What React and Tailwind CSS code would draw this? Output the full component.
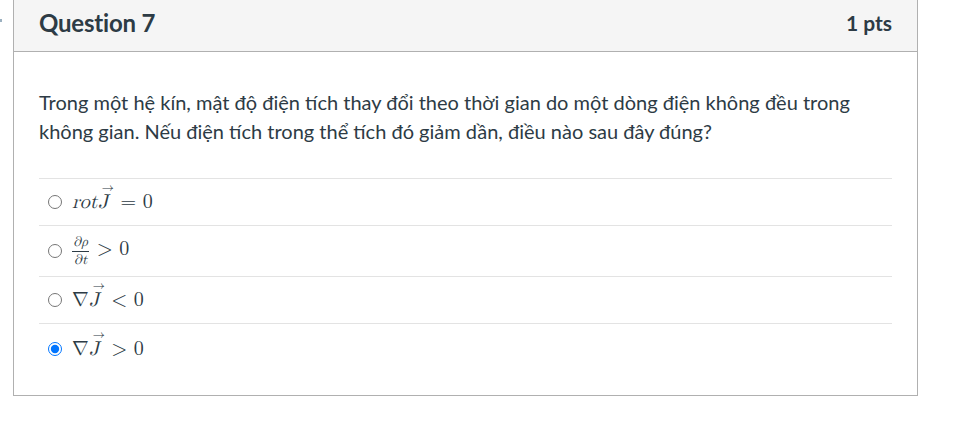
import React from "react";

const serif = { fontFamily: '"Latin Modern Math","Liberation Serif","DejaVu Serif",serif' };

function VecJ() {
  return (
    <span className="relative inline-block italic">
      J
      <span className="absolute left-[4px] top-[-6px] text-[12px] not-italic leading-none">→</span>
    </span>
  );
}

function Row({ children, checked, h, last }) {
  return (
    <div className={`flex items-center ${h} ${last ? "" : "border-b border-[#e3e3e3]"}`}>
      <input
        type="radio"
        name="q7"
        defaultChecked={checked}
        className="ml-[9px] mr-[10px] h-[14px] w-[14px] m-0"
      />
      <span className="text-[20px] text-[#2d3b45]" style={serif}>{children}</span>
    </div>
  );
}

export default function App() {
  return (
    <div className="relative w-[975px] h-[422px] bg-white" style={{ fontFamily: 'Lato, "Open Sans", sans-serif' }}>
      <span className="absolute left-0 top-[19px] w-[2px] h-[3px] bg-[#9bb0c0]" />
      <div className="ml-[13px] w-[905px] h-[396px] border-x border-b border-[#b0b0b0] flex flex-col">
        <div className="h-[52px] bg-[#f5f5f5] border-b border-[#b0b0b0] flex items-start justify-between px-[25px] pt-[5px]">
          <span className="text-[24px] font-bold text-[#2d3b45] tracking-[-0.2px]">Question 7</span>
          <span className="text-[21px] font-bold text-[#2d3b45] pt-[2px]">1 pts</span>
        </div>
        <div className="px-[25px] pt-[36px]">
          <p className="text-[20px] leading-[29px] text-[#2d3b45]">
            Trong một hệ kín, mật độ điện tích thay đổi theo thời gian do một dòng điện không đều trong không gian. Nếu điện tích trong thể tích đó giảm dần, điều nào sau đây đúng?
          </p>
          <div className="mt-[32px] border-t border-[#e3e3e3]">
            <Row h="h-[47px]">
              <span className="italic">rot</span><VecJ /> <span className="ml-[6px]">= 0</span>
            </Row>
            <Row h="h-[51px]">
              <span className="inline-flex flex-col items-center align-middle text-[14px] leading-[15px] mr-[8px] italic">
                <span className="border-b border-[#2d3b45] px-[1px] pb-[1px]">∂ρ</span>
                <span className="pt-[1px]">∂t</span>
              </span>
              <span>&gt; 0</span>
            </Row>
            <Row h="h-[47px]">
              <span>∇</span><VecJ /> <span className="ml-[6px]">&lt; 0</span>
            </Row>
            <Row h="h-[49px]" checked last>
              <span>∇</span><VecJ /> <span className="ml-[6px]">&gt; 0</span>
            </Row>
          </div>
        </div>
      </div>
    </div>
  );
}
